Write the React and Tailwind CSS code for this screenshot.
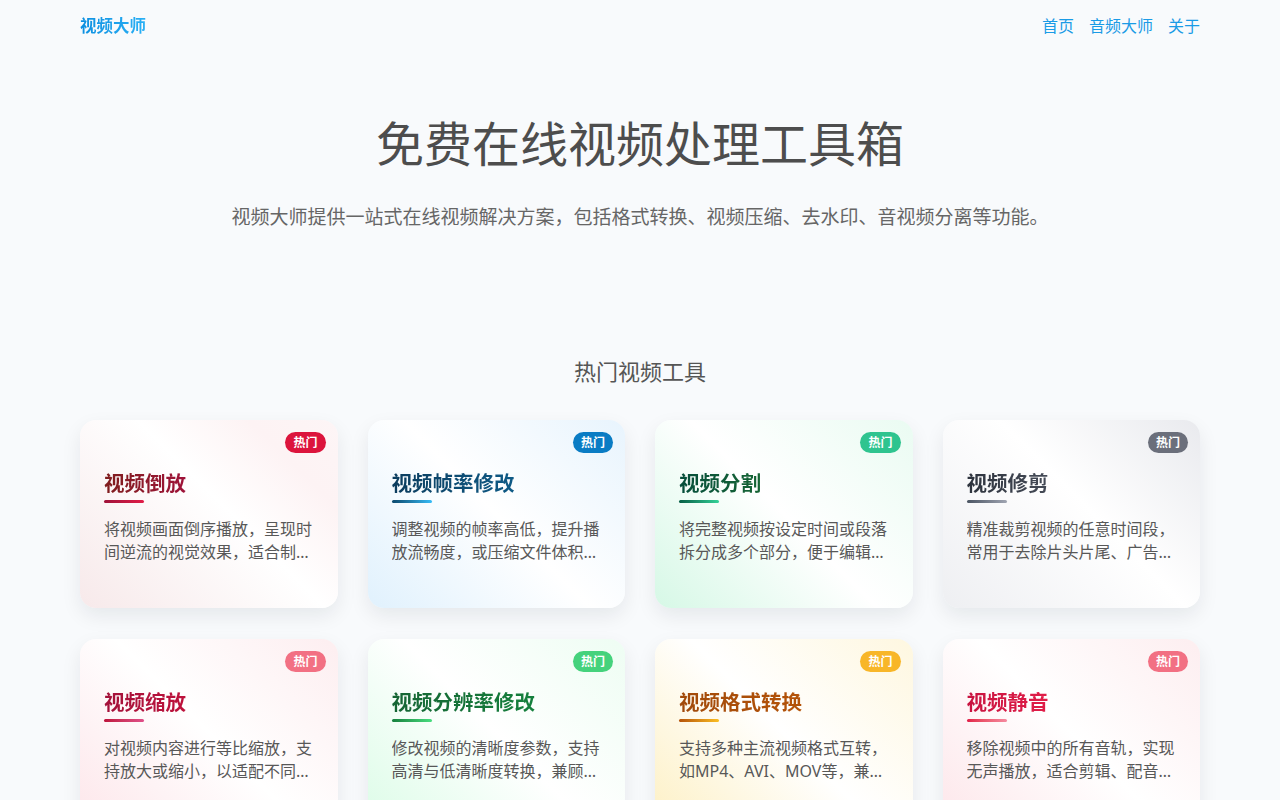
import React from 'react'

const tools = [
  {
    title: '视频倒放',
    desc: '将视频画面倒序播放，呈现时间逆流的视觉效果，适合制作创意短片',
    titleCls: 'from-[#7f1d1d] to-[#9f1239]',
    badge: 'bg-[#dc143c]',
    line: 'from-[#9f1239] to-[#e11d48]',
    bg: 'bg-[linear-gradient(45deg,#f7e9ea_0%,#ffffff_55%,#fdf3f4_80%,#fdf5f6_100%)]',
  },
  {
    title: '视频帧率修改',
    desc: '调整视频的帧率高低，提升播放流畅度，或压缩文件体积以便分享',
    titleCls: 'from-[#0c3d5e] to-[#0e5a86]',
    badge: 'bg-[#0a7cc4]',
    line: 'from-[#0c4a6e] to-[#38bdf8]',
    bg: 'bg-[linear-gradient(45deg,#e0f1fd_0%,#ffffff_50%,#e8f4fd_100%)]',
  },
  {
    title: '视频分割',
    desc: '将完整视频按设定时间或段落拆分成多个部分，便于编辑与分享',
    titleCls: 'from-[#064e3b] to-[#166534]',
    badge: 'bg-[#2fc48f]',
    line: 'from-[#065f46] to-[#34d399]',
    bg: 'bg-[linear-gradient(45deg,#d6f8e6_0%,#ffffff_50%,#eafbf2_100%)]',
  },
  {
    title: '视频修剪',
    desc: '精准裁剪视频的任意时间段，常用于去除片头片尾、广告等内容',
    titleCls: 'from-[#2d333d] to-[#454b57]',
    badge: 'bg-[#6b6f7b]',
    line: 'from-[#4b5563] to-[#a1a6b3]',
    bg: 'bg-[linear-gradient(45deg,#eeeff2_0%,#ffffff_55%,#e9eaee_100%)]',
  },
  {
    title: '视频缩放',
    desc: '对视频内容进行等比缩放，支持放大或缩小，以适配不同的播放设备',
    titleCls: 'from-[#a3123a] to-[#be123c]',
    badge: 'bg-[#f27083]',
    line: 'from-[#be123c] to-[#e0508a]',
    bg: 'bg-[linear-gradient(45deg,#fde6ea_0%,#ffffff_50%,#fdeef0_100%)]',
  },
  {
    title: '视频分辨率修改',
    desc: '修改视频的清晰度参数，支持高清与低清晰度转换，兼顾画质与体积',
    titleCls: 'from-[#166534] to-[#15803d]',
    badge: 'bg-[#45d27c]',
    line: 'from-[#15803d] to-[#4ade80]',
    bg: 'bg-[linear-gradient(45deg,#dcfce7_0%,#ffffff_50%,#eefdf3_100%)]',
  },
  {
    title: '视频格式转换',
    desc: '支持多种主流视频格式互转，如MP4、AVI、MOV等，兼容各类播放器',
    titleCls: 'from-[#a14a0a] to-[#b45309]',
    badge: 'bg-[#f8b628]',
    line: 'from-[#b45309] to-[#fbbf24]',
    bg: 'bg-[linear-gradient(45deg,#fdf0c4_0%,#ffffff_50%,#fef7e0_100%)]',
  },
  {
    title: '视频静音',
    desc: '移除视频中的所有音轨，实现无声播放，适合剪辑、配音等二次创作',
    titleCls: 'from-[#c81340] to-[#e11d48]',
    badge: 'bg-[#f27083]',
    line: 'from-[#e11d48] to-[#f58aa0]',
    bg: 'bg-[linear-gradient(45deg,#fde6ea_0%,#ffffff_50%,#fdeef0_100%)]',
  },
]

function ToolCard({ tool }) {
  return (
    <div className={`relative rounded-2xl ${tool.bg} px-6 pt-[49px] pb-[44px] shadow-[0_8px_20px_rgba(15,23,42,0.08)]`}>
      <span className={`absolute right-3 top-3 rounded-full ${tool.badge} px-2 py-[3px] text-xs font-bold leading-[15px] text-white`}>
        热门
      </span>
      <h3 className={`inline-block bg-gradient-to-r ${tool.titleCls} bg-clip-text text-[20.5px] font-bold leading-7 text-transparent`}>
        {tool.title}
      </h3>
      <div className={`mt-[3px] h-[3px] w-10 rounded-full bg-gradient-to-r ${tool.line}`}></div>
      <p className="mt-[15px] line-clamp-2 text-base leading-[23px] text-[#585858]">{tool.desc}</p>
    </div>
  )
}

export default function App() {
  return (
    <div className="min-h-screen bg-[#f8fafc] font-['Noto_Sans','Noto_Sans_CJK_SC',sans-serif]">
      <header className="mx-auto flex h-[52px] max-w-[1120px] items-center justify-between">
        <a className="bg-gradient-to-r from-[#0b8fe0] to-[#2ab0f5] bg-clip-text text-[16.5px] font-bold text-transparent">
          视频大师
        </a>
        <nav className="flex gap-[15px] text-base text-[#1a9be6]">
          <a>首页</a>
          <a>音频大师</a>
          <a>关于</a>
        </nav>
      </header>

      <section className="pt-[60px] text-center">
        <h1 className="text-[48px] leading-[64px] text-[#4d4d4d]">免费在线视频处理工具箱</h1>
        <p className="mt-[27px] text-[19px] leading-7 text-[#666]">
          视频大师提供一站式在线视频解决方案，包括格式转换、视频压缩、去水印、音视频分离等功能。
        </p>
      </section>

      <section className="mx-auto max-w-[1120px] pt-[124px] pb-10">
        <h2 className="text-center text-[22px] leading-8 text-[#555]">热门视频工具</h2>
        <div className="mt-[33px] grid grid-cols-4 gap-x-[30px] gap-y-[31px]">
          {tools.map((t) => (
            <ToolCard key={t.title} tool={t} />
          ))}
        </div>
      </section>
    </div>
  )
}
